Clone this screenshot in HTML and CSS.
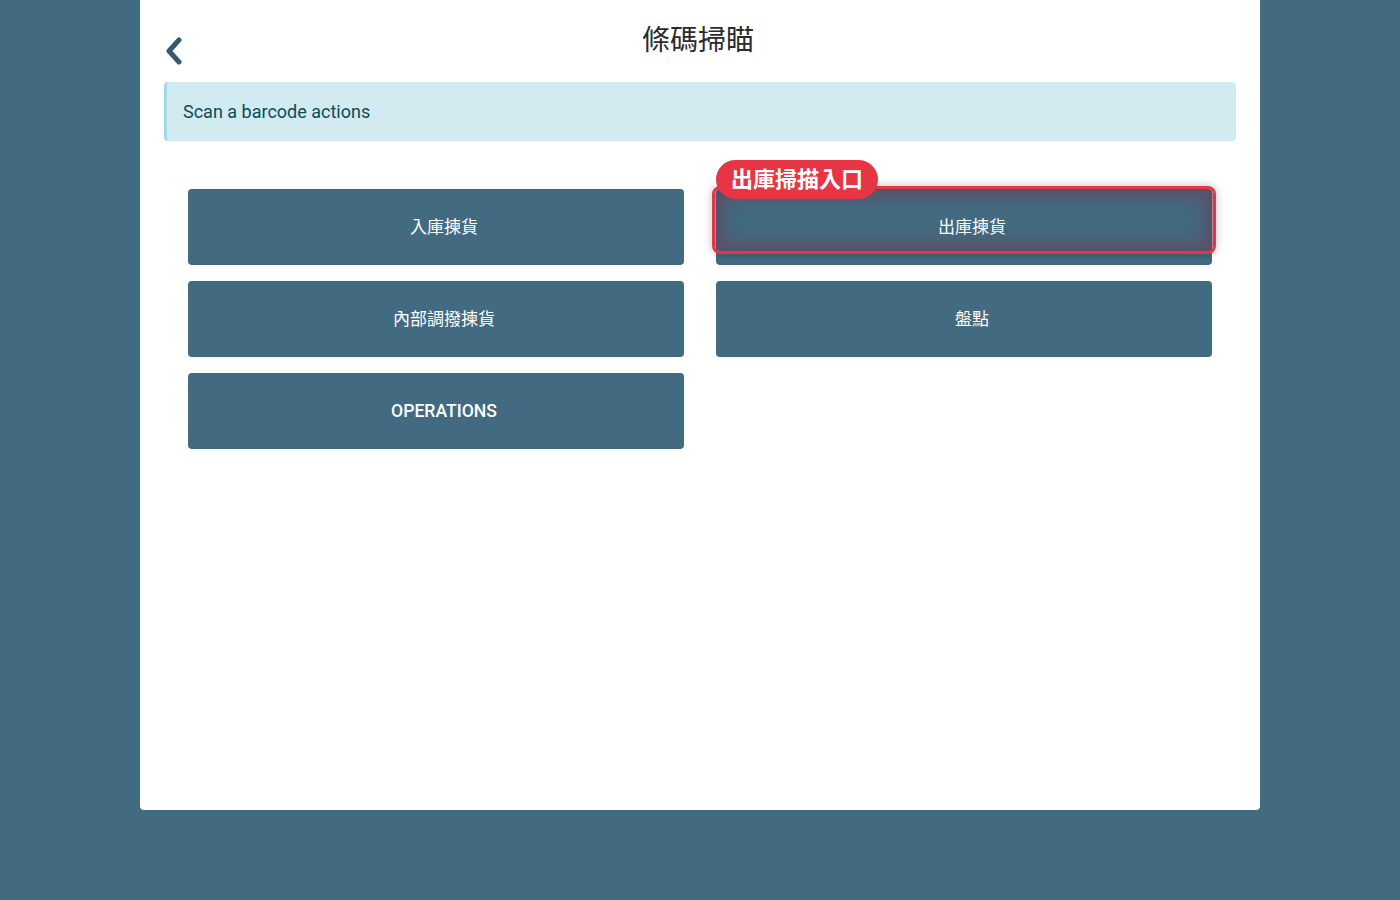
FILE: index.html
```html
<!DOCTYPE html>
<html lang="zh-Hant">
<head>
    <meta charset="UTF-8">
    <meta name="viewport" content="width=device-width, initial-scale=1.0">
    <title>條碼掃瞄</title>
    <link rel="stylesheet" href="styles.css">
</head>
<body>
    <div class="container">
        <div class="header">
            <a class="back" href="#">
                <svg width="20" height="28" viewBox="0 0 20 28">
                    <path d="M15 3 L5 14 L15 25" fill="none" stroke="#35596e" stroke-width="5" stroke-linecap="round" stroke-linejoin="round"/>
                </svg>
            </a>
            <h1>條碼掃瞄</h1>
        </div>

        <div class="alert">Scan a barcode actions</div>

        <div class="actions">
            <button class="action">入庫揀貨</button>
            <div class="action-wrap">
                <button class="action">出庫揀貨</button>
                <div class="highlight"></div>
                <span class="tag">出庫掃描入口</span>
            </div>
            <button class="action">內部調撥揀貨</button>
            <button class="action">盤點</button>
            <button class="action latin">OPERATIONS</button>
        </div>
    </div>
</body>
</html>
```

FILE: styles.css
```css
body {
    margin: 0;
    background-color: #426a80;
    font-family: Roboto, "Noto Sans CJK TC", sans-serif;
    color: #333;
}

.container {
    width: 1120px;
    height: 810px;
    margin: 0 auto;
    background-color: #fff;
    border-radius: 0 0 4px 4px;
    padding: 0 24px;
    box-sizing: border-box;
}

.header {
    position: relative;
    height: 82px;
}

.back {
    position: absolute;
    left: 0;
    top: 37px;
    display: block;
}

h1 {
    margin: 0;
    padding: 22px 4px 0 0;
    text-align: center;
    font-size: 28px;
    font-weight: 400;
    line-height: 38px;
    color: #2b2b2b;
}

.alert {
    background-color: #d1ebf0;
    border-left: 3px solid #a3dbe4;
    border-radius: 4px;
    padding: 0 16px;
    height: 59px;
    line-height: 59px;
    font-size: 18px;
    color: #0c4b57;
}

.actions {
    display: grid;
    grid-template-columns: 1fr 1fr;
    column-gap: 32px;
    row-gap: 16px;
    padding: 48px 24px 0;
}

.action {
    display: block;
    width: 100%;
    height: 76px;
    padding: 0 0 3px 16px;
    border: none;
    border-radius: 4px;
    background-color: #426a80;
    color: #fff;
    font-family: Roboto, "Noto Sans CJK TC", sans-serif;
    font-size: 17px;
    font-weight: 400;
    cursor: pointer;
}

.action.latin {
    font-size: 17.6px;
    font-weight: 500;
    padding-bottom: 1px;
}

.action-wrap {
    position: relative;
}

.highlight {
    position: absolute;
    left: -4px;
    top: -3px;
    width: 504px;
    height: 68px;
    box-sizing: border-box;
    border: 3px solid #e63645;
    border-radius: 8px;
    box-shadow: inset 0 0 16px 8px rgba(105, 65, 90, 0.7), 0 0 10px rgba(0, 0, 0, 0.25);
    pointer-events: none;
}

.tag {
    position: absolute;
    left: 0;
    top: -29px;
    height: 39px;
    line-height: 39px;
    padding: 0 15px;
    border-radius: 20px;
    background-color: #e63645;
    color: #fff;
    font-size: 22px;
    font-weight: 700;
    white-space: nowrap;
}
```
